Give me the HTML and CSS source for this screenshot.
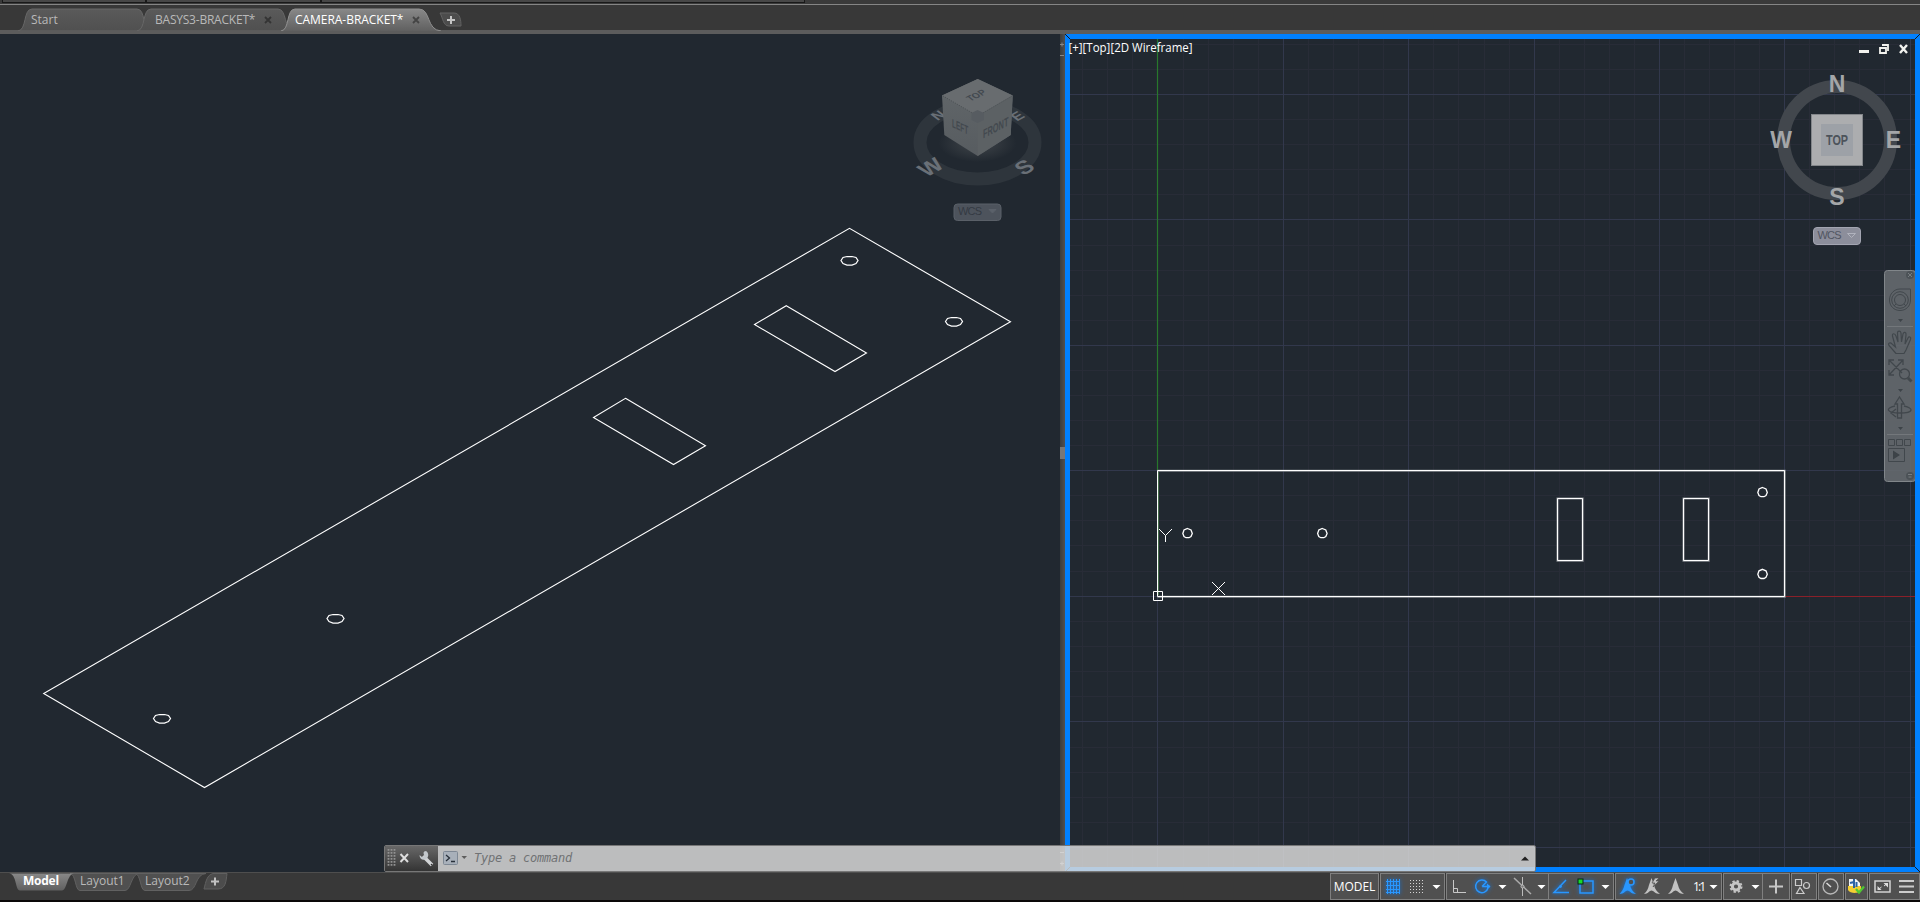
FILE: index.html
```html
<!DOCTYPE html>
<html lang="en">
<head>
<meta charset="utf-8">
<title>CAMERA-BRACKET</title>
<link rel="stylesheet" href="styles.css">
</head>
<body>
<div class="app">
  <div class="ribbon-edge"><i class="panel p1"></i><i class="panel p2"></i><i class="panel p3"></i></div>

  <nav class="file-tabs">
    <div class="ftab start">
      <svg class="shape" width="132" height="23"><path d="M0 23C9 22 5 1 14 1H119C128 1 124 22 132 23Z" fill="url(#tabOff)" stroke="#676767"/></svg>
      <span class="label">Start</span>
    </div>
    <div class="ftab basys">
      <svg class="shape" width="156" height="23"><path d="M0 23C9 22 5 1 14 1H141C150 1 147 22 156 23Z" fill="url(#tabOff)" stroke="#676767"/></svg>
      <span class="label">BASYS3-BRACKET*</span>
      <svg class="close" width="8" height="8"><path d="M1 1L7 7M7 1L1 7" stroke="#343434" stroke-width="1.800"/></svg>
    </div>
    <div class="ftab camera">
      <svg class="shape" width="164" height="23"><path d="M0 23C9 22 5 1 14 1H138C150 1 145 22 160 23Z" fill="url(#tabOn)"/><path d="M0 23C9 22 5 1 14 1H138C150 1 145 22 160 23" fill="none" stroke="#909090"/></svg>
      <span class="label">CAMERA-BRACKET*</span>
      <svg class="close" width="8" height="8"><path d="M1 1L7 7M7 1L1 7" stroke="#444" stroke-width="1.800"/></svg>
    </div>
    <svg class="add" width="24" height="16"><path d="M1 1H15C21 1 22 8 22 14H10C4 14 4 6 1 1Z" fill="#4c4c4c" stroke="#626262"/><path d="M8 8H16M12 4V12" stroke="#c4c4c4" stroke-width="2"/></svg>
    <svg class="defs" width="0" height="0"><defs>
      <linearGradient id="tabOff" x2="0" y2="1"><stop offset="0" stop-color="#5a5a5a"/><stop offset="1" stop-color="#505050"/></linearGradient>
      <linearGradient id="tabOn" x2="0" y2="1"><stop offset="0" stop-color="#888"/><stop offset="1" stop-color="#606060"/></linearGradient>
    </defs></svg>
  </nav>

  <main class="workspace">
    <svg class="view iso" width="1060" height="838" viewBox="0 34 1060 838">
      <defs>
        <radialGradient id="glow"><stop offset=".4" stop-color="#343a40"/><stop offset="1" stop-color="#343a40" stop-opacity="0"/></radialGradient>
        <linearGradient id="faceL" x2="0" y2="1"><stop offset="0" stop-color="#62676a"/><stop offset="1" stop-color="#575c60"/></linearGradient>
      </defs>
      <g class="wire">
        <path d="M43.700 693.500L204.500 787.500L1010.500 321.700L849.500 228.300Z"/>
        <path d="M786.300 305.700L866.500 353L835 371.500L754.500 324.500Z"/>
        <path d="M625.500 398.300L705.500 445.700L673.500 464.500L593.500 417.500Z"/>
        <path id="hole" stroke-width="1.250" d="M153.500 718.500L155.500 715.500L159.500 714.500H164.500L168.500 715.500L170.500 718.500L168.500 721.500L164.500 723H159.500L155.500 721.500Z"/>
        <use href="#hole" x="173.500" y="-100"/><use href="#hole" x="687.500" y="-458"/><use href="#hole" x="792" y="-397"/>
      </g>
      <g>
        <ellipse cx="977.500" cy="142.500" rx="57.500" ry="36.500" fill="none" stroke="#2e353c" stroke-width="13"/>
        <g class="rose-iso">
          <text transform="matrix(.82 -.46 .72 .54 937.500 121)" font-size="16">N</text>
          <text transform="matrix(.82 -.46 .72 .54 1017 121.500)" font-size="16">E</text>
          <text transform="matrix(.87 -.48 .68 .65 926.500 177.500)" font-size="23">W</text>
          <text transform="matrix(.87 -.48 .68 .65 1023 176)" font-size="23">S</text>
        </g>
        <ellipse cx="977.500" cy="143" rx="39" ry="19" fill="url(#glow)"/>
        <path d="M977.700 79L942 95.500L944.300 135L977.700 156L1010.700 135L1012.700 95.500Z" fill="url(#faceL)"/>
        <path d="M977.700 79L942 95.500L977.700 116L1012.700 95.500Z" fill="#686c6f"/>
        <path d="M977.700 116L1012.700 95.500L1010.700 135L977.700 156Z" fill="#5c6164"/>
        <path d="M943 96L977.700 116L1012 96" fill="none" stroke="#4b5054" stroke-dasharray="1 1.300"/>
        <path d="M971.500 113L977.500 110L984 113V120L977.500 123L971.500 120Z" fill="#575c61"/>
        <g class="cube-text">
          <text transform="matrix(.83 -.4 .6 .5 970.500 101.500)" font-size="12.500" textLength="20" lengthAdjust="spacingAndGlyphs">TOP</text>
          <text transform="matrix(.85 .4 0 1 952 127)" font-size="12" textLength="19" lengthAdjust="spacingAndGlyphs">LEFT</text>
          <text transform="matrix(.85 -.44 0 1 983 138.500)" font-size="12.500" textLength="30" lengthAdjust="spacingAndGlyphs">FRONT</text>
        </g>
        <rect x="954" y="204" width="47" height="16.500" rx="3.500" fill="#4d535c" stroke="#5a6068"/>
        <text x="958" y="215" font-size="11" fill="#343a43" textLength="24" class="sans">WCS</text>
        <path d="M989 209.500H996L992.500 213Z" fill="#5b616a" stroke="#5b616a"/>
      </g>
    </svg>

    <div class="splitter">
      <svg width="5" height="838"><path d="M0 10.500H4M2 8.500V12.500M0 21.500H4" stroke="#888"/><rect y="413" width="5" height="12" fill="#777"/><path d="M0 818.500H4M0 829.500H4M2 827.500V831.500" stroke="#aaa"/></svg>
    </div>

    <svg class="view plan" width="855" height="838" viewBox="1065 34 855 838">
      <rect x="1065" y="34" width="855" height="838" fill="#212830"/>
      <g stroke="#282c37">
        <path d="M1082.500 34V871M1107.500 34V871M1132.500 34V871M1183.500 34V871M1208.500 34V871M1233.500 34V871M1258.500 34V871M1308.500 34V871M1333.500 34V871M1358.500 34V871M1383.500 34V871M1433.500 34V871M1458.500 34V871M1484.500 34V871M1509.500 34V871M1559.500 34V871M1584.500 34V871M1609.500 34V871M1634.500 34V871M1684.500 34V871M1709.500 34V871M1734.500 34V871M1759.500 34V871M1809.500 34V871M1834.500 34V871M1859.500 34V871M1884.500 34V871"/>
        <path d="M1065 44.500H1920M1065 69.500H1920M1065 119.500H1920M1065 144.500H1920M1065 169.500H1920M1065 194.500H1920M1065 245.500H1920M1065 270.500H1920M1065 295.500H1920M1065 320.500H1920M1065 370.500H1920M1065 395.500H1920M1065 420.500H1920M1065 445.500H1920M1065 495.500H1920M1065 520.500H1920M1065 545.500H1920M1065 571.500H1920M1065 621.500H1920M1065 646.500H1920M1065 671.500H1920M1065 696.500H1920M1065 747.500H1920M1065 772.500H1920M1065 797.500H1920M1065 822.500H1920"/>
      </g>
      <path d="M1283.500 34V871M1408.500 34V871M1534.500 34V871M1659.500 34V871M1784.500 34V871M1910.500 34V871M1157.500 596V871M1065 94.500H1920M1065 219.500H1920M1065 345.500H1920M1065 470.500H1920M1065 596.500H1157M1065 721.500H1920M1065 847.500H1920" stroke="#32384c"/>
      <path d="M1157.500 34V470" stroke="#28782c" stroke-width="1.200"/><path d="M1785 596.500H1920" stroke="#8a2029"/>
      <path d="M1158.500 472V595" stroke="#466e4b"/>
      <g fill="none" stroke="#888c91" stroke-width="2"><path d="M1157.500 470.700H1784.700V596.700H1157.500"/><path d="M1557.500 498.500H1582.700V560.700H1557.500ZM1683.500 498.500H1708.700V560.700H1683.500Z"/></g>
      <g class="wire">
        <path d="M1157.500 470.500H1784.500V596.500H1157.500ZM1557.500 498.500H1582.500V560.500H1557.500ZM1683.500 498.500H1708.500V560.500H1683.500Z"/>
        <g stroke-width="1.300"><path id="h2" d="M1187.500 528.500L1191 530L1192.300 533.500L1191 536.500L1189 537.700H1186L1184 536.500L1182.800 533.500L1184 530Z"/>
        <use href="#h2" x="134.800"/><use href="#h2" x="575" y="-41"/><use href="#h2" x="575" y="40.800"/></g>
        <path d="M1153.500 591.500H1162.500V600.500H1153.500ZM1159 529L1165.500 535.500L1172 529M1165.500 535.500V542M1212 582L1225 595M1225 582L1212 595"/>
      </g>
      <g>
        <circle cx="1837" cy="140" r="53.500" fill="none" stroke="#42474d" stroke-width="13"/>
        <g class="rose">
          <text x="1837" y="92">N</text><text x="1837" y="204.500">S</text><text x="1781" y="148">W</text><text x="1893.500" y="148">E</text>
        </g>
        <rect x="1811.500" y="114.500" width="51" height="51" fill="#acadaf" stroke="#83868a"/>
        <rect x="1821" y="124" width="32" height="32" fill="#9da1a7"/>
        <text x="1826" y="145" font-size="14" font-weight="700" fill="#4c535b" class="sans" textLength="22" lengthAdjust="spacingAndGlyphs">TOP</text>
        <rect x="1813.500" y="227.500" width="47" height="17" rx="3.500" fill="#8c8e9b" stroke="#a3a5b1"/>
        <text x="1817.500" y="239" font-size="11" fill="#515561" textLength="24" class="sans">WCS</text>
        <path d="M1847.500 233.500H1855.500L1851.500 237.500Z" fill="none" stroke="#b0b2bd"/>
      </g>
      <g>
        <rect x="1884.500" y="270.500" width="31" height="211" rx="3" fill="#666b70" fill-opacity=".88" stroke="#81868a"/>
        <g fill="none" stroke="#41474c">
          <path d="M1887 326.500H1913M1887 434.500H1913" stroke="#73777b"/>
          <path d="M1900 289H1910.500V300C1910.500 306 1906 310.500 1900 310.500C1894 310.500 1889.500 306 1889.500 300C1889.500 294 1894 289 1900 289Z"/><circle cx="1900" cy="300" r="8.300"/><circle cx="1900" cy="300" r="5.500"/><path d="M1896 304L1894 306M1904 304L1906 306"/>
          <path d="M1896 353.500L1889 345.500C1887.500 343 1890.500 342 1892 344L1895.500 347L1892.500 336C1892 333 1895 333 1896 336L1898 342L1897.500 333C1897.500 330.500 1900.500 330.500 1901 333L1901.500 342L1903 334C1903.500 331.500 1906.500 332 1906 335L1905 344L1908 338C1909 336 1911.500 337 1910.500 339.500L1906 350L1904 353.500Z" stroke-width="1.200"/>
          <path d="M1889 360L1902 373M1903 360L1889 375M1889 365V360H1894M1898 360H1903V365M1889 370V375H1894" stroke-width="1.300"/><circle cx="1904.500" cy="374" r="5" stroke-width="1.300"/><path d="M1908 378L1911.500 381.500" stroke-width="3"/>
          <path d="M1897.500 418V404H1895L1899.500 397L1904 404H1901.500V418Z" stroke-width="1.300"/><path d="M1895 406C1885 408 1886 413 1900 413C1914 413 1914 408 1904 406M1896 409L1891 413L1896 417" stroke-width="1.300"/>
          <path d="M1888.500 439.500H1894.500V445.500H1888.500ZM1896.500 439.500H1902.500V445.500H1896.500ZM1904.500 439.500H1910.500V445.500H1904.500ZM1888.500 448.500H1904.500V461.500H1888.500Z"/>
        </g>
        <path d="M1898 319H1903L1900.500 322ZM1898 389H1903L1900.500 392ZM1898 427H1903L1900.500 430ZM1893 450.500L1900 455L1893 459.500Z" fill="#3d4348"/>
        <circle cx="1910" cy="275" r="4" fill="#4c5257"/><path d="M1908 273L1912 277M1912 273L1908 277" stroke="#777c80"/>
        <circle cx="1910" cy="476" r="4" fill="#4c5257"/><path d="M1908 474.500H1912M1908.500 477H1911.500" stroke="#777c80"/>
      </g>
      <rect x="1067.500" y="36.500" width="850" height="833" fill="none" stroke="#0080ff" stroke-width="5"/>
      <path d="M1065 34L1070 39M1920 34L1915 39M1065 872L1070 867M1920 872L1915 867" stroke="#15191d"/>
      <text x="1068.500" y="52" font-size="12" fill="#fff" textLength="124" lengthAdjust="spacingAndGlyphs" class="ui">[+][Top][2D Wireframe]</text>
      <path d="M1859 51.500H1869" stroke="#f2f2ee" stroke-width="3"/>
      <path d="M1880 48H1886V53H1880ZM1882 45H1888V51" fill="none" stroke="#f2f2ee" stroke-width="1.800"/>
      <path d="M1900 45L1907 53M1907 45L1900 53" stroke="#f2f2ee" stroke-width="2.400"/>
    </svg>

    <div class="command">
      <div class="grip">
        <svg width="54" height="26"><path d="M4 4V22M7 4V22M10 4V22" transform="translate(-.5)" stroke="#929292" stroke-width="1.800" stroke-dasharray="1.800 1.200"/><path d="M15.500 9L23 17M23 9L15.500 17" stroke="#ddd" stroke-width="2"/><path d="M38 11L47 20" stroke="#d2d4d6" stroke-width="3.500"/><path d="M41 6C38 6 38 9 40 11L37 12L34.500 10C34.500 14 38 16 41 14C44 12 44 8 41 6Z" fill="#c3c8cc"/><circle cx="46.500" cy="19.500" r=".8" fill="#333"/></svg>
      </div>
      <div class="entry">
        <svg width="26" height="14"><rect x=".5" y=".5" width="14" height="13" rx="1" fill="#a8b0ba" stroke="#7e8894"/><path d="M3 4L6.500 7L3 10M8 10.500H12" fill="none" stroke="#28303a" stroke-width="1.300"/><path d="M18.500 5H24L21.200 8Z" fill="#5d5d5d"/></svg>
        <span class="prompt">Type a command</span>
        <svg class="up" width="8" height="5"><path d="M0 4.500L4 .5L8 4.500Z" fill="#202020"/></svg>
      </div>
    </div>
  </main>

  <footer class="bottom">
    <div class="layout-tabs">
      <div class="ltab model"><svg class="shape" width="66" height="18"><path d="M0 .5C8 1 6 17.500 11 17.500H53C58 17.500 58 1 65 .5Z" fill="url(#tabOn)"/></svg><span>Model</span></div>
      <div class="ltab l1"><svg class="shape" width="70" height="18"><path d="M0 .5C6 1 5 17.500 10 17.500H55C61 17.500 61 1 69 .5Z" fill="#505050" stroke="#616161"/></svg><span>Layout1</span></div>
      <div class="ltab l2"><svg class="shape" width="72" height="18"><path d="M0 .5C6 1 5 17.500 10 17.500H54C62 17.500 60 1 71 .5Z" fill="#505050" stroke="#616161"/></svg><span>Layout2</span></div>
      <svg class="ladd" width="26" height="18"><path d="M10 .5H24C23 8 23 16 15 16H1C3 8 4 2 10 .5Z" fill="#4c4c4c" stroke="#606060"/><path d="M8 8.500H16M12 4.500V12.500" stroke="#c2c2c2" stroke-width="2"/></svg>
    </div>
    <div class="status">
      <div class="group g-model">MODEL</div>
      <div class="group g-grid">
        <svg width="63" height="25"><g class="lit"><path d="M6.500 5V20M9.500 5V20M12.500 5V20M15.500 5V20M18.500 5V20M5 7.500H19M5 11.500H19M5 15.500H19M5 18.500H19" fill="none" stroke-width="1"/></g><path d="M29 6.500H43M29 9.500H43M29 12.500H43M29 15.500H43M29 18.500H43" stroke="#d6d6d6" stroke-dasharray="1 2"/><path class="caret" d="M51.500 11H59.500L55.500 15Z"/></svg>
      </div>
      <div class="group g-snap">
        <svg width="100" height="25"><path d="M6.500 6V18.500H19M6.500 14.500H10.500V18.500" fill="none" stroke="#c8c8c8"/><g class="lit"><path d="M41 14A6.300 6.300 0 1 1 39.500 8M35 12.500H43M35 12.500L40 7.500" fill="none" stroke-width="1.500"/><path d="M40 9.500L43.500 12.500L40 15.500Z" stroke="none"/></g><path class="caret" d="M51.500 11H59.500L55.500 15Z"/><path d="M67 4L84 20" stroke="#aaa" stroke-width="1.500"/><path d="M75.500 3V22" stroke="#bbb"/><circle cx="75.500" cy="12.500" r="1.500" fill="#777" stroke="#bbb"/><path class="caret" d="M90.500 11H98.500L94.500 15Z"/></svg>
      </div>
      <div class="group g-osnap">
        <svg width="63" height="25"><g class="lit"><path d="M20 18.500H5L17 6" fill="none" stroke-width="1.500"/><circle cx="11.500" cy="12.500" r="1"/><path d="M31 7H44V19H31Z" fill="none" stroke-width="1.500"/></g><rect x="29" y="5" width="5" height="5" fill="#18da28" stroke="#06240a"/><path class="caret" d="M52.500 11H60.500L56.500 15Z"/></svg>
      </div>
      <div class="group g-anno">
        <svg width="105" height="25"><g class="lit"><path stroke="none" d="M11 4L8.500 11C7.500 15 6 17 3.500 20C8 20 9.500 16.500 11.500 16.500C13.500 16.500 15 20 20 20C16.500 17 15 15 14 11Z"/><circle cx="15" cy="8" r="3" fill="#505050" stroke-width="1.500"/></g><g fill="#c2c2c2"><path d="M35.500 4L33 11C32 15 31 17 28 20C32 20 33.500 16.500 35.500 16.500C37.500 16.500 39 20 44 20C40.500 17 39 15 38 11Z"/><path d="M39 4L36 9H39L37 13L43 7H40L43 4Z" stroke="#505050" stroke-width=".7"/><path d="M59.500 4L57 11C56 15 55 17 52 20C56 20 57.500 16.500 59.500 16.500C61.500 16.500 63 20 68 20C64.500 17 63 15 62 11Z"/></g><text x="77" y="17" font-size="12" fill="#fff" class="ui" textLength="13">1:1</text><path class="caret" d="M93.500 11H101.500L97.500 15Z"/></svg>
      </div>
      <div class="group g-gear">
        <svg width="37" height="25"><g transform="translate(12 12.500)"><circle r="3.600" fill="none" stroke="#c5c5c5" stroke-width="3"/><circle r="5.500" fill="none" stroke="#c5c5c5" stroke-width="2" stroke-dasharray="2.300 2.020"/></g><path class="caret" d="M27.500 11H35.500L31.500 15Z"/></svg>
      </div>
      <div class="group g-plus"><svg width="25" height="25"><path d="M6 12.500H20M13 5.500V19.500" stroke="#c7c7c7" stroke-width="2"/></svg></div>
      <div class="group g-iso"><svg width="24" height="25"><path d="M3.500 5.500H9.500V11.500H3.500ZM8 13.500L12 19.500H4.500Z" fill="none" stroke="#ccc" stroke-width="1.200"/><circle cx="14.500" cy="11.500" r="3" fill="none" stroke="#ccc" stroke-width="1.200"/></svg></div>
      <div class="group g-hw"><svg width="25" height="25"><circle cx="11.500" cy="12.500" r="7.500" fill="none" stroke="#b8b8b8" stroke-width="1.300"/><path d="M7.500 9L12 13" stroke="#ddd" stroke-width="1.500"/></svg></div>
      <div class="group g-trust"><svg width="22" height="25"><path d="M3 5H10L14 9V12H3Z" fill="#f0f3f5"/><path d="M2 12H15V15C15 20 4 20 2 16Z" fill="#f3ce32"/><path d="M8 5V14M10.500 8V13M4 9L8 8" fill="none" stroke="#2b62a4" stroke-width="2"/><path d="M10 15L13 18.500L18 12.500" fill="none" stroke="#4fc832" stroke-width="2.300"/></svg></div>
      <div class="group g-end"><svg width="49" height="25"><rect x="5" y="7" width="15" height="11" fill="none" stroke="#d2d2d2" stroke-width="1.500"/><path d="M13.500 9H18V13.500ZM7.500 12V16H11.500Z" fill="#ddd"/><path d="M14 12L16.500 10M9 15L11.500 13" stroke="#ddd"/><path d="M29 7H44M29 12.500H44M29 18H44" stroke="#ccc" stroke-width="2"/></svg></div>
    </div>
  </footer>
</div>
</body>
</html>
```

FILE: styles.css
```css
* { box-sizing: border-box; }
body { margin: 0; background: #000; font-family: "Open Sans", "Noto Sans", sans-serif; }
svg { display: block; flex: none; }
.app { width: 1920px; height: 902px; display: flex; flex-direction: column; overflow: hidden; }
.ui { font-family: "Open Sans", "Noto Sans", sans-serif; }
.sans { font-family: "Liberation Sans", Arial, sans-serif; }

.ribbon-edge { height: 5px; display: flex; background: #3a3a3a; border-bottom: 1px solid #858585; padding-left: 2px; }
.panel { height: 3px; background: #474747; border: solid #191919; border-width: 0 1px 1px; }
.p1 { width: 144px; }
.p2 { width: 175px; }
.p3 { width: 484px; }

.file-tabs { position: relative; height: 29px; background: #383838; border-bottom: 4px solid #5c5c5c; display: flex; align-items: flex-start; padding: 3px 0 0 18px; }
.ftab { position: relative; height: 23px; display: flex; align-items: center; font-size: 12px; color: #b9b9b9; }
.ftab .shape, .ltab .shape { position: absolute; left: 0; top: 0; }
.ftab .label, .ftab .close { position: relative; }
.start { width: 119px; padding-left: 13px; }
.basys { width: 144px; padding-left: 18px; justify-content: space-between; padding-right: 9px; }
.camera { width: 159px; padding-left: 14px; justify-content: space-between; padding-right: 20px; color: #fff; }
.basys .label { letter-spacing: -.22px; }
.camera .label { letter-spacing: -.04px; }
.add { margin: 4px 0 0 -1px; }
.defs { position: absolute; }

.workspace { position: relative; height: 838px; display: flex; background: #212830; }
.view { display: block; }
.wire { fill: none; stroke: #fff; }
.iso .wire { stroke-width: 1.1; }
.rose-iso text { font-family: "Liberation Sans", Arial, sans-serif; font-weight: 700; fill: #6a7077; }
.cube-text text { font-family: "Liberation Sans", Arial, sans-serif; font-weight: 700; fill: #43494f; }
.rose text { font-family: "Liberation Sans", Arial, sans-serif; font-weight: 700; font-size: 23px; fill: #a4a6a8; text-anchor: middle; }
.splitter { width: 5px; background: linear-gradient(90deg, #3c3c3c, #505050); }

.command { position: absolute; left: 384px; top: 811px; width: 1152px; height: 27px; display: flex; border: 1px solid #777; border-radius: 2px; overflow: hidden; }
.grip { width: 53px; background: linear-gradient(#686868, #343434); }
.grip svg { margin-top: -1px; }
.entry { flex: 1; display: flex; align-items: center; gap: 5px; padding: 0 6px 1px 5px; background: rgba(218, 218, 218, .84); }
.prompt { font: italic 12px/24px "DejaVu Sans Mono", monospace; letter-spacing: -.22px; color: #707274; }
.up { margin-left: auto; }

.bottom { height: 30px; display: flex; justify-content: space-between; background: #383838; border-top: 1px solid #4e4e4e; border-bottom: 2px solid #0a0808; }
.layout-tabs { display: flex; padding-left: 9px; }
.ltab { position: relative; height: 18px; font-size: 12px; line-height: 15px; color: #b9b9b9; }
.ltab span { position: relative; }
.model { width: 61px; padding-left: 14px; color: #fff; font-weight: 700; letter-spacing: -.25px; z-index: 1; }
.l1 { width: 65px; padding-left: 10px; }
.l2 { width: 68px; padding-left: 10px; }

.status { display: flex; height: 27px; }
.group { height: 27px; border: 1px solid #808080; background: #505050; display: flex; margin-right: 1px; overflow: hidden; }
.g-model { width: 49px; justify-content: center; align-items: center; color: #fff; font-size: 12px; letter-spacing: -.1px; }
.g-grid { width: 65px; }
.g-snap { width: 103px; margin-right: 0; }
.g-osnap { width: 65px; border-left: 0; margin-right: 1px; }
.g-anno { width: 107px; }
.g-gear { width: 40px; margin-right: 0; }
.g-plus { width: 27px; border-left: 0; }
.g-iso { width: 26px; }
.g-hw { width: 26px; }
.g-trust { width: 23px; }
.g-end { width: 51px; margin-right: 0; }
.caret { fill: #fff; }
.lit { stroke: #2997ff; fill: #2997ff; filter: drop-shadow(0 0 2px #0878ef); }
```
